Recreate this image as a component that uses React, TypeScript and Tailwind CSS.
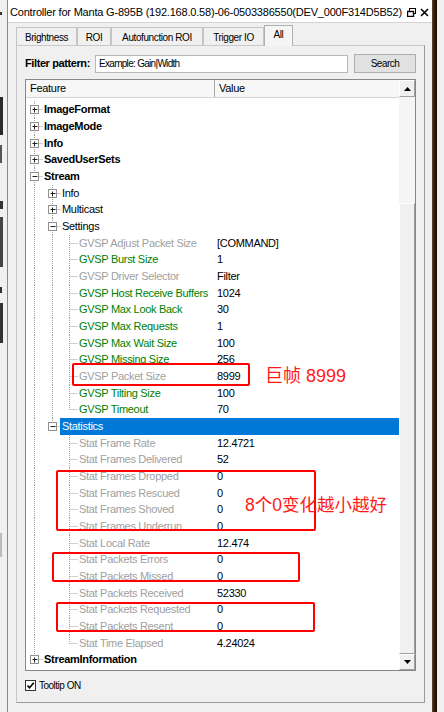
import React from 'react';

type Kind = 'bold' | 'normal' | 'green' | 'gray';
type Guide = 'none' | 'line' | 'tee' | 'end';

interface TreeRow {
  label: string;
  value?: string;
  kind: Kind;
  guides: Guide[];
  box?: '+' | '-';
  selected?: boolean;
}

const top = (label: string, box: '+' | '-', last = false): TreeRow => ({
  label,
  kind: 'bold',
  guides: [last ? 'end' : 'tee'],
  box,
});

const mid = (label: string, box: '+' | '-', last = false, selected = false): TreeRow => ({
  label,
  kind: 'normal',
  guides: ['line', last ? 'end' : 'tee'],
  box,
  selected,
});

const leaf = (label: string, value: string, kind: Kind, parentLast: boolean, last = false): TreeRow => ({
  label,
  value,
  kind,
  guides: ['line', parentLast ? 'none' : 'line', last ? 'end' : 'tee'],
});

const rows: TreeRow[] = [
  top('ImageFormat', '+'),
  top('ImageMode', '+'),
  top('Info', '+'),
  top('SavedUserSets', '+'),
  top('Stream', '-'),
  mid('Info', '+'),
  mid('Multicast', '+'),
  mid('Settings', '-'),
  leaf('GVSP Adjust Packet Size', '[COMMAND]', 'gray', false),
  leaf('GVSP Burst Size', '1', 'green', false),
  leaf('GVSP Driver Selector', 'Filter', 'gray', false),
  leaf('GVSP Host Receive Buffers', '1024', 'green', false),
  leaf('GVSP Max Look Back', '30', 'green', false),
  leaf('GVSP Max Requests', '1', 'green', false),
  leaf('GVSP Max Wait Size', '100', 'green', false),
  leaf('GVSP Missing Size', '256', 'green', false),
  leaf('GVSP Packet Size', '8999', 'gray', false),
  leaf('GVSP Tilting Size', '100', 'green', false),
  leaf('GVSP Timeout', '70', 'green', false, true),
  mid('Statistics', '-', true, true),
  leaf('Stat Frame Rate', '12.4721', 'gray', true),
  leaf('Stat Frames Delivered', '52', 'gray', true),
  leaf('Stat Frames Dropped', '0', 'gray', true),
  leaf('Stat Frames Rescued', '0', 'gray', true),
  leaf('Stat Frames Shoved', '0', 'gray', true),
  leaf('Stat Frames Underrun', '0', 'gray', true),
  leaf('Stat Local Rate', '12.474', 'gray', true),
  leaf('Stat Packets Errors', '0', 'gray', true),
  leaf('Stat Packets Missed', '0', 'gray', true),
  leaf('Stat Packets Received', '52330', 'gray', true),
  leaf('Stat Packets Requested', '0', 'gray', true),
  leaf('Stat Packets Resent', '0', 'gray', true),
  leaf('Stat Time Elapsed', '4.24024', 'gray', true, true),
  top('StreamInformation', '+', true),
];

const colW = [18, 18, 17];
const colX = [8.5, 8.5, 7.5];

const GuideCell = ({ w, x, type, box }: { w: number; x: number; type: Guide; box?: '+' | '-' }) => (
  <svg width={w} height={17} className="block shrink-0 overflow-visible">
    {(type === 'line' || type === 'tee') && (
      <line x1={x} y1={0} x2={x} y2={17} stroke="#a0a0a0" strokeDasharray="1 1" />
    )}
    {type === 'end' && <line x1={x} y1={0} x2={x} y2={8.5} stroke="#a0a0a0" strokeDasharray="1 1" />}
    {(type === 'tee' || type === 'end') && (
      <line x1={x} y1={8.5} x2={w - 1} y2={8.5} stroke="#a0a0a0" strokeDasharray="1 1" />
    )}
    {box && (
      <g>
        <rect x={x - 4} y={4.5} width={8} height={8} fill="#fff" stroke="#919191" />
        <line x1={x - 2} y1={8.5} x2={x + 3} y2={8.5} stroke="#222" />
        {box === '+' && <line x1={x} y1={6.5} x2={x} y2={11.5} stroke="#222" />}
      </g>
    )}
  </svg>
);

const kindClass: Record<Kind, string> = {
  bold: 'font-bold text-black',
  normal: 'text-black',
  green: 'text-[#008000]',
  gray: 'text-[#a0a0a0]',
};

const Row = ({ row, index }: { row: TreeRow; index: number }) => {
  const level = row.guides.length - 1;
  return (
    <div className={`flex overflow-visible ${index % 3 === 2 ? 'h-[16px]' : 'h-[17px]'}`}>
      <div className="flex w-[190px] shrink-0">
        {row.guides.map((g, i) => (
          <GuideCell key={i} w={colW[i]} x={colX[i]} type={g} box={i === level ? row.box : undefined} />
        ))}
        <div
          className={`-ml-[2px] flex h-full flex-1 items-center whitespace-nowrap pl-[2px] ${
            row.selected ? 'bg-[#0078d7] text-white' : kindClass[row.kind]
          }`}
        >
          {row.label}
        </div>
      </div>
      <div className={`flex h-full flex-1 items-center pl-px text-black ${row.selected ? 'bg-[#0078d7]' : ''}`}>
        {row.value}
      </div>
    </div>
  );
};

const ScrollArrow = ({ up }: { up?: boolean }) => (
  <div className="flex h-full w-full items-center justify-center border border-t-white border-l-white border-r-[#a0a0a0] border-b-[#a0a0a0] bg-[#f0f0f0]">
    <svg width="7" height="4" viewBox="0 0 7 4">
      {up ? <path d="M0 4 L3.5 0 L7 4 Z" fill="#000" /> : <path d="M0 0 L3.5 4 L7 0 Z" fill="#000" />}
    </svg>
  </div>
);

const tabs = [
  { label: 'Brightness', w: 'w-[61px]' },
  { label: 'ROI', w: 'w-[34px]' },
  { label: 'Autofunction ROI', w: 'w-[92px]' },
  { label: 'Trigger IO', w: 'w-[61px]' },
];

export default function App() {
  return (
    <div className="relative flex h-[712px] w-[444px] overflow-hidden bg-[#f0f0f0] font-['Liberation_Sans','Noto_Sans_CJK_SC',sans-serif] text-[11px] tracking-[-0.3px] text-black">
      {/* background window fragments on the left */}
      <div className="flex w-[7px] shrink-0 flex-col items-start bg-[#f0f0f0]">
        <div className="mt-[12px] h-[3px] w-[2px] bg-[#333]" />
        <div className="mt-[82px] h-[38px] w-[3px] bg-[#2a2a2a]" />
        <div className="mt-[10px] h-[18px] w-[2px] bg-[#555]" />
        <div className="mt-[38px] h-[8px] w-[3px] bg-[#333]" />
        <div className="mt-[8px] h-[50px] w-[3px] bg-[#444]" />
        <div className="mt-[20px] h-[6px] w-[2px] bg-[#333]" />
        <div className="mt-[10px] h-[40px] w-[3px] bg-[#333]" />
        <div className="mt-[190px] h-[24px] w-[2px] bg-[#bbb]" />
      </div>

      {/* main window */}
      <div className="flex w-[425px] shrink-0 flex-col border-l border-[#8a8a8a]">
        <div className="flex h-[23px] shrink-0 items-center border-b border-[#d4d4d4] bg-white pl-[2px] pr-[3px] pt-[3px]">
          <span className="flex-1 whitespace-nowrap text-[11px] tracking-[-0.2px]">
            Controller for Manta G-895B (192.168.0.58)-06-0503386550(DEV_000F314D5B52)
          </span>
          <svg width="9" height="9" viewBox="0 0 9 9" className="mr-[4px]">
            <rect x="2.5" y="0.5" width="6" height="5" fill="none" stroke="#000" />
            <rect x="0.5" y="3.5" width="6" height="5" fill="#fff" stroke="#000" strokeWidth="1.4" />
          </svg>
          <svg width="9" height="9" viewBox="0 0 9 9">
            <path d="M1 1 L8 8 M8 1 L1 8" stroke="#000" strokeWidth="1.6" />
          </svg>
        </div>

        <div className="flex flex-1 flex-col pb-[9px] pl-[8px] pr-[7px]">
          {/* tab strip */}
          <div className="flex h-[22px] shrink-0 items-end text-[10px] tracking-[-0.4px]">
            {tabs.map((t) => (
              <div
                key={t.label}
                className={`flex h-[18px] ${t.w} items-center justify-center border-l border-r border-t border-[#c4c4c4] pt-[2px]`}
              >
                {t.label}
              </div>
            ))}
            <div className="relative -mb-px flex h-[21px] w-[29px] items-center justify-center border-l border-r border-t border-[#b0b0b0] bg-[#f5f5f5] pb-[3px]">
              All
            </div>
          </div>

          {/* tab panel */}
          <div className="flex flex-1 flex-col border border-[#c8c8c8] border-r-[#9a9a9a] border-b-[#9a9a9a] px-[8px] pt-[8px]">
            <div className="flex h-[19px] items-center">
              <span className="w-[70px] font-bold tracking-[-0.4px]">Filter pattern:</span>
              <div className="flex h-[18px] w-[253px] items-center border border-[#b8b8b8] bg-white pl-[3px] text-[10px] tracking-[-0.7px]">
                Example: Gain|Width
              </div>
              <div className="ml-[6px] flex h-[19px] flex-1 items-center justify-center border border-[#adadad] bg-[#e1e1e1] text-[10px] tracking-[-0.5px]">
                Search
              </div>
            </div>

            {/* tree */}
            <div className="mt-[6px] flex h-[592px] border border-[#828790] bg-white">
              <div className="flex min-w-0 flex-1 flex-col">
                <div className="flex h-[18px] shrink-0 border-b border-[#d5d5d5] bg-[#f7f7f7]">
                  <div className="flex w-[189px] items-center border-r border-[#a8a8a8] pl-[4px]">Feature</div>
                  <div className="flex items-center pl-[4px]">Value</div>
                </div>
                <div className="flex flex-col pt-[3px]">
                  {rows.map((r, i) => (
                    <Row key={i} row={r} index={i} />
                  ))}
                </div>
              </div>
              <div className="flex w-[16px] shrink-0 flex-col">
                <div className="h-[17px]">
                  <ScrollArrow up />
                </div>
                <div className="h-[106px] bg-[#f5f5f5]" />
                <div className="h-[451px] border border-t-white border-l-white border-r-[#a0a0a0] border-b-[#a0a0a0] bg-[#f0f0f0]" />
                <div className="h-[16px]">
                  <ScrollArrow />
                </div>
              </div>
            </div>

            <div className="mt-[8px] flex h-[12px] items-center">
              <div className="flex h-[11px] w-[11px] items-center justify-center border border-[#333] bg-white">
                <svg width="9" height="9" viewBox="0 0 9 9">
                  <path d="M1.5 4.5 L3.5 6.8 L7.8 1.8" fill="none" stroke="#000" strokeWidth="1.6" />
                </svg>
              </div>
              <span className="ml-[3px] text-[10px] tracking-[-0.5px]">Tooltip ON</span>
            </div>
          </div>
        </div>
      </div>

      {/* desktop edge on the right */}
      <div className="w-[5px] shrink-0 bg-gradient-to-r from-[#6b4526] via-[#2e1a0c] to-[#1a0e06]" />
      <div className="flex-1 bg-[#f0f0f0]" />

      {/* red annotations */}
      <div className="absolute left-[72px] top-[363px] h-[23px] w-[178px] rounded-[2px] border-2 border-[#ff0000]" />
      <div className="absolute left-[265px] top-[364px] whitespace-nowrap text-[18px] leading-[24px] tracking-normal text-[#ff1a1a]">
        巨帧 8999
      </div>
      <div className="absolute left-[56px] top-[470px] h-[61px] w-[260px] rounded-[2px] border-2 border-[#ff0000]" />
      <div className="absolute left-[245px] top-[493px] whitespace-nowrap text-[17.5px] leading-[24px] tracking-normal text-[#ff1a1a]">
        8个0变化越小越好
      </div>
      <div className="absolute left-[52px] top-[552px] h-[30px] w-[248px] rounded-[2px] border-2 border-[#ff0000]" />
      <div className="absolute left-[56px] top-[602px] h-[30px] w-[259px] rounded-[2px] border-2 border-[#ff0000]" />
    </div>
  );
}
